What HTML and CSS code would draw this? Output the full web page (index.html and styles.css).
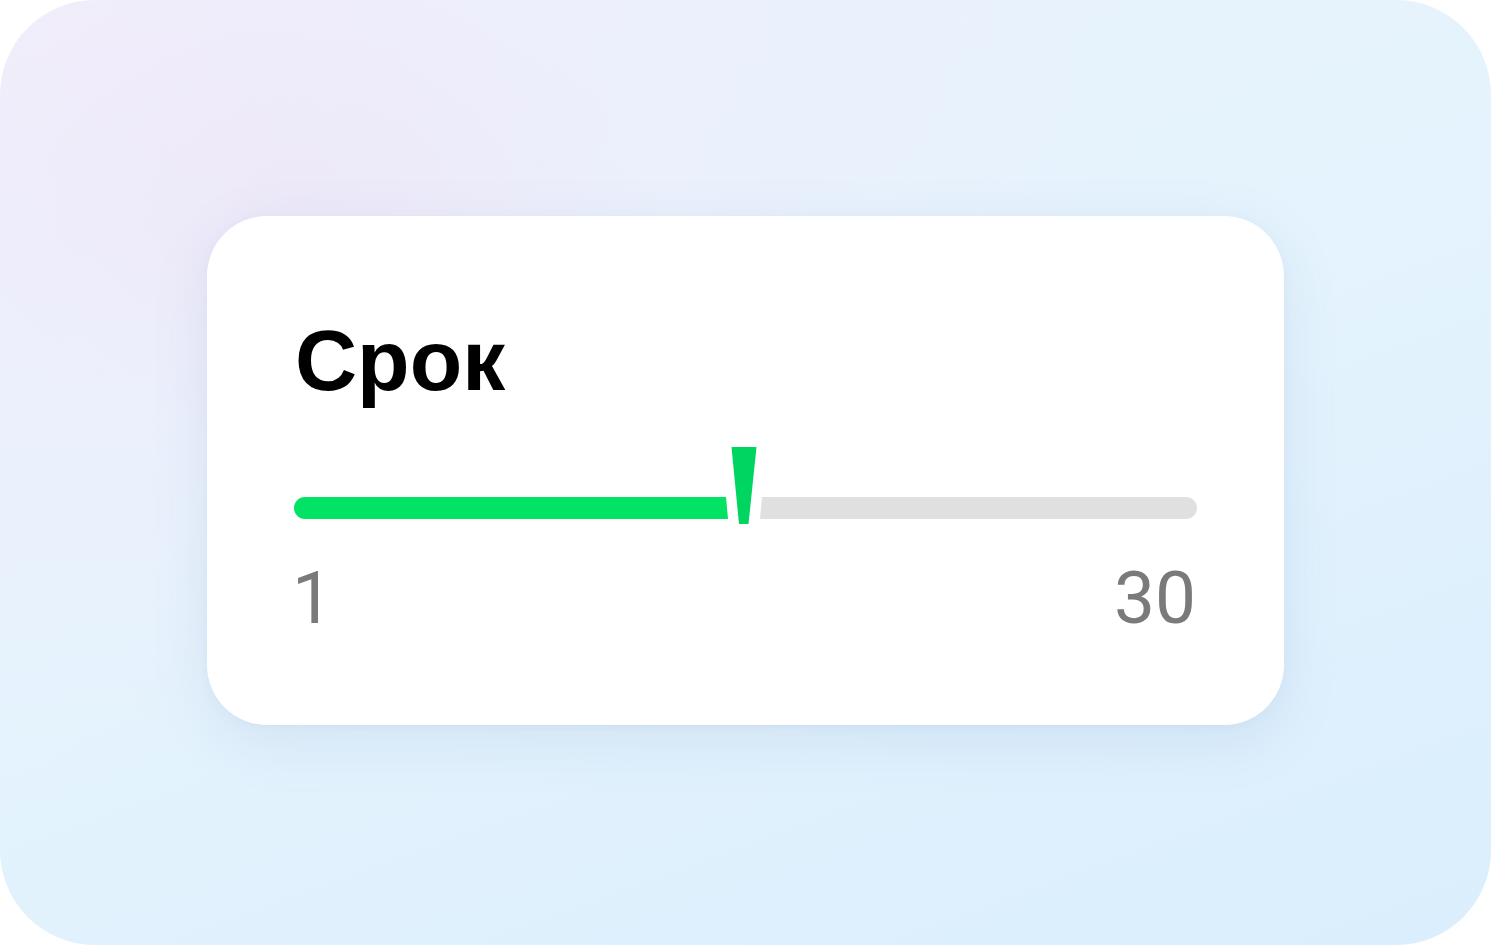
FILE: index.html
```html
<!DOCTYPE html>
<html lang="ru">
<head>
<meta charset="utf-8">
<title>Срок</title>
<link rel="stylesheet" href="styles.css">
</head>
<body>
<div class="frame">
  <section class="card">
    <h1 class="title">Срок</h1>
    <div class="slider">
      <div class="track">
        <div class="fill" style="width: 434px"></div>
        <div class="rest"></div>
      </div>
      <svg class="thumb" style="left: 437px" width="26" height="77" viewBox="0 0 26 77" aria-hidden="true">
        <polygon points="0.5,0 25.5,0 17.5,77 8,77" fill="#00d55f"/>
      </svg>
    </div>
    <div class="labels">
      <span class="label label-min">1</span>
      <span class="label label-max">30</span>
    </div>
  </section>
</div>
</body>
</html>
```
FILE: styles.css
```css
html, body {
  margin: 0;
  padding: 0;
  background: #ffffff;
}

.frame {
  width: 1491px;
  height: 945px;
  box-sizing: border-box;
  border-radius: 95px;
  padding-bottom: 4px;
  display: flex;
  align-items: center;
  justify-content: center;
  background:
    radial-gradient(ellipse 360px 240px at 300px 200px, rgba(236, 228, 246, 0.55), rgba(236, 228, 246, 0) 100%),
    radial-gradient(ellipse 1100px 720px at 80px 40px, rgba(241, 237, 251, 1) 0%, rgba(241, 237, 251, 0.55) 45%, rgba(241, 237, 251, 0) 100%),
    linear-gradient(160deg, #e9f2fd 0%, #e4f3fd 50%, #daeefd 100%);
}

.card {
  width: 1077px;
  height: 509px;
  box-sizing: border-box;
  padding: 101px 87px 91px;
  background: #ffffff;
  border-radius: 60px;
  box-shadow: 0 16px 56px rgba(100, 130, 175, 0.13), 0 2px 8px rgba(100, 130, 175, 0.05);
  display: flex;
  flex-direction: column;
}

.title {
  margin: 0 0 44px;
  padding-left: 1px;
  font-family: "Liberation Sans", Arial, sans-serif;
  font-weight: 700;
  font-size: 86px;
  line-height: 86px;
  color: #000000;
}

.slider {
  position: relative;
  height: 77px;
}

.track {
  position: absolute;
  left: 0;
  right: 0;
  top: 50px;
  height: 22px;
  display: flex;
  justify-content: space-between;
}

.fill {
  height: 22px;
  background: #02e265;
  border-radius: 11px 0 0 11px;
  clip-path: polygon(0 0, calc(100% - 2px) 0, 100% 100%, 0 100%);
}

.rest {
  width: 437px;
  height: 22px;
  background: #e0e0e0;
  border-radius: 0 11px 11px 0;
  clip-path: polygon(2px 0, 100% 0, 100% 100%, 0 100%);
}

.thumb {
  position: absolute;
  top: 0;
  display: block;
}

.labels {
  margin-top: 38px;
  display: flex;
  justify-content: space-between;
  font-family: Roboto, "Liberation Sans", sans-serif;
  font-weight: 400;
  font-size: 73px;
  line-height: 72px;
  color: #7a7a7a;
}

.label-min {
  margin-left: -2px;
}

.label-max {
  margin-right: 1px;
}
```
